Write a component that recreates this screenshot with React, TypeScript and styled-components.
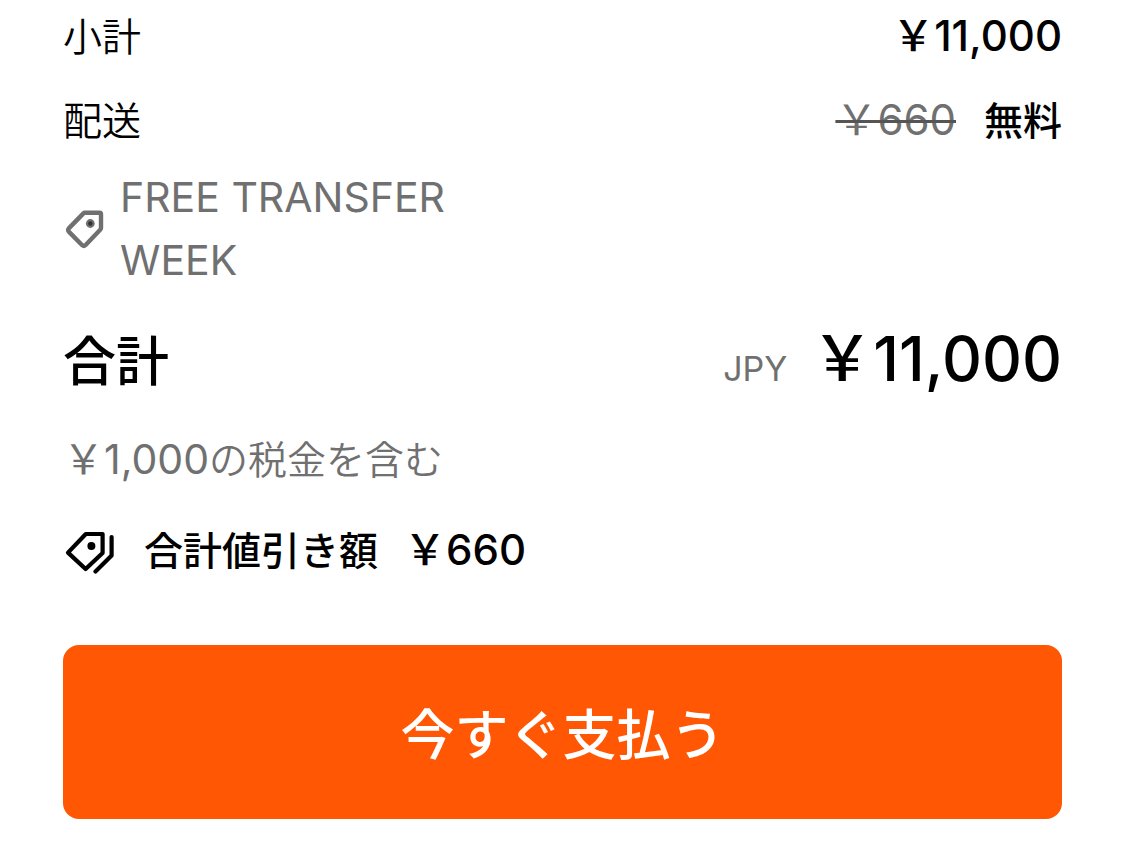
import React from "react";
import styled, { createGlobalStyle } from "styled-components";

const GlobalStyle = createGlobalStyle`
  *, *::before, *::after { box-sizing: border-box; }
  body {
    margin: 0;
    background: #fff;
    color: #000;
    font-family: Inter, "Noto Sans CJK JP", sans-serif;
    font-size: 41px;
    line-height: 63px;
  }
`;

const Summary = styled.main`
  display: flex;
  flex-direction: column;
  padding: 4px 63px 26px;
`;

const Row = styled.div<{ $top?: number }>`
  display: flex;
  justify-content: space-between;
  align-items: baseline;
  margin-top: ${(p) => p.$top ?? 0}px;
`;

const Ja = styled.span<{ $size?: number }>`
  font-family: "Noto Sans CJK JP", sans-serif;
  font-size: ${(p) => p.$size ?? 39}px;
  line-height: 1;
`;

const Label = styled.span<{ $strong?: boolean }>`
  font-weight: ${(p) => (p.$strong ? 500 : 350)};
`;

const Amounts = styled.div<{ $gap: number }>`
  display: flex;
  align-items: baseline;
  gap: ${(p) => p.$gap}px;
`;

const Amount = styled.span`
  font-size: 42px;
  font-weight: 500;
`;

const OldAmount = styled.s`
  color: #707070;
  font-size: 42px;
  text-decoration: line-through 3px #555;
`;

const Promotion = styled.div`
  display: flex;
  align-items: center;
  gap: 15px;
  max-width: 400px;
  margin-top: 14px;
  color: #707070;
`;

const Currency = styled.span`
  color: #707070;
  font-size: 34px;
`;

const TotalAmount = styled.strong`
  font-size: 62px;
  font-weight: 500;
`;

const Tax = styled.p`
  margin: 28px 0 0;
  color: #707070;

  ${Ja} {
    font-weight: 350;
  }
`;

const Savings = styled.div`
  display: flex;
  align-items: center;
  margin-top: 27px;
  font-weight: 500;
`;

const SavingsText = styled.span`
  display: flex;
  align-items: baseline;
  gap: 26px;
  margin-left: 27px;
`;

const Icon = styled.svg`
  flex: none;
  fill: none;
  stroke: currentColor;
  stroke-linecap: round;
  stroke-linejoin: round;
`;

const PayButton = styled.button`
  width: 100%;
  margin-top: 64px;
  padding: 47px 16px;
  border: 0;
  border-radius: 16px;
  background: #ff5703;
  color: #fff;
  font-family: "Noto Sans CJK JP", sans-serif;
  font-size: 54px;
  font-weight: 500;
  line-height: 80px;
  cursor: pointer;
`;

const YEN = "\uFFE5";

const TagIcon = () => (
  <Icon width="42" height="42" viewBox="0 0 42 42" strokeWidth="4.4" aria-hidden="true">
    <path d="M21.8 4.8H36.6Q38 4.8 38 6.2V20Q38 21 37.2 21.8L22.4 37.2Q20.8 38.6 19.2 37.2L5.8 23.6Q4.5 22 5.8 20.4L20.2 5.6Q21 4.8 21.8 4.8Z" />
    <circle cx="27.3" cy="15.5" r="4.4" fill="currentColor" stroke="none" />
    <circle cx="27.3" cy="15.5" r="2.2" fill="#333" stroke="none" />
  </Icon>
);

const TagsIcon = () => (
  <Icon width="54" height="48" viewBox="0 -3 54 48" strokeWidth="4.2" aria-hidden="true">
    <path d="M22.8 5H39.6V24L22.6 40L5 23.6Z" />
    <path d="M48.6 8V26.6L32.5 42.5" />
    <circle cx="28.4" cy="17" r="4" fill="currentColor" stroke="none" />
  </Icon>
);

export default function App() {
  return (
    <>
      <GlobalStyle />
      <Summary lang="ja">
        <Row>
          <Label><Ja>小計</Ja></Label>
          <Amount>{`${YEN}11,000`}</Amount>
        </Row>
        <Row $top={20}>
          <Label><Ja>配送</Ja></Label>
          <Amounts $gap={28}>
            <OldAmount>{`${YEN}660`}</OldAmount>
            <Amount><Ja>無料</Ja></Amount>
          </Amounts>
        </Row>
        <Promotion>
          <TagIcon />
          <span>FREE TRANSFER WEEK</span>
        </Promotion>
        <Row $top={35}>
          <Label $strong><Ja $size={53}>合計</Ja></Label>
          <Amounts $gap={24}>
            <Currency>JPY</Currency>
            <TotalAmount>{`${YEN}11,000`}</TotalAmount>
          </Amounts>
        </Row>
        <Tax>{`${YEN}1,000`}<Ja>の税金を含む</Ja></Tax>
        <Savings>
          <TagsIcon />
          <SavingsText>
            <Ja>合計値引き額</Ja>
            <Amount>{`${YEN}660`}</Amount>
          </SavingsText>
        </Savings>
        <PayButton type="button">今すぐ支払う</PayButton>
      </Summary>
    </>
  );
}
